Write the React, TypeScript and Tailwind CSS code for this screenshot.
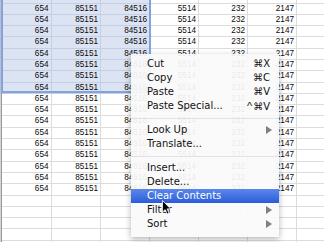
const cols = ['654', '85151', '84516', '5514', '232', '2147'];

const gridCols = 'grid grid-cols-[2px_49.5px_49.5px_49px_49px_49px_49px_27px]';

const Row = ({ filled, selected, first }: { filled: boolean; selected: boolean; first?: boolean }) => (
  <div className={`${gridCols} h-[11.3px] ${first ? '-mt-[7.8px]' : ''}`}>
    <div className={`border-r border-[#9a9a9a] ${selected ? 'bg-[#b9c3d8]' : 'bg-[#d4d4d4]'}`}></div>
    {cols.map((v, i) => (
      <div
        key={i}
        className={`border-r border-b pr-[2px] text-right text-[8.2px] leading-[10.3px] text-[#0a0a0a] ${
          selected && i < 3 ? 'bg-[#dce4f3] border-[#c4cfe3]' : 'border-[#dcdcdc]'
        }`}
      >
        {filled ? v : ''}
      </div>
    ))}
    <div className="border-b border-[#dcdcdc]"></div>
  </div>
);

const Arrow = () => (
  <svg width="6" height="8" viewBox="0 0 6 8">
    <polygon points="0,0 6,4 0,8" fill="#808080" />
  </svg>
);

type Item = { label: string; key?: string; ctrl?: boolean; sub?: boolean; active?: boolean } | 'sep';

const items: Item[] = [
  { label: 'Cut', key: '⌘X' },
  { label: 'Copy', key: '⌘C' },
  { label: 'Paste', key: '⌘V' },
  { label: 'Paste Special...', key: '⌘V', ctrl: true },
  'sep',
  { label: 'Look Up', sub: true },
  { label: 'Translate...' },
  'sep',
  { label: 'Insert...' },
  { label: 'Delete...' },
  { label: 'Clear Contents', active: true },
  { label: 'Filter', sub: true },
  { label: 'Sort', sub: true },
];

export default function App() {
  const rows = Array.from({ length: 23 }, (_, i) => i);
  return (
    <div className="relative w-[324px] h-[242px] overflow-hidden bg-white font-['Liberation_Sans',sans-serif]">
      <div className="flex flex-col">
        {rows.map((i) => (
          <Row key={i} first={i === 0} filled={i <= 17} selected={i <= 8} />
        ))}
      </div>

      {/* selection outline */}
      <div className="absolute left-[1px] top-[-3px] w-[150px] h-[96px] border-2 border-[#86a2da]"></div>

      {/* context menu */}
      <div className="absolute left-[131px] top-[54px] w-[148px] h-[183px] pt-[3px] bg-[rgba(250,250,250,0.93)] shadow-[0_2px_6px_rgba(0,0,0,0.3)] font-['DejaVu_Sans',sans-serif] text-[10px] text-[#111]">
        {items.map((it, i) =>
          it === 'sep' ? (
            <div key={i} className="h-[10px] flex items-center">
              <div className="w-full h-px bg-[#e2e2e2]"></div>
            </div>
          ) : (
            <div
              key={i}
              className={`h-[14px] flex items-center justify-between pl-[16px] pr-[7px] leading-[14px] ${
                it.active ? 'bg-linear-to-b from-[#5c87ea] to-[#2a5cda] text-white' : ''
              }`}
            >
              <span>{it.label}</span>
              {it.key && (
                <span className="pr-[2px]">
                  {it.ctrl && <span className="font-['Liberation_Sans',sans-serif] text-[11px] mr-px">^</span>}
                  {it.key}
                </span>
              )}
              {it.sub && <Arrow />}
            </div>
          )
        )}
      </div>

      {/* mouse cursor */}
      <svg className="absolute left-[162px] top-[200px]" width="10" height="15" viewBox="0 0 10 15">
        <path d="M0.5 0.5 L0.5 12 L3.2 9.6 L5.2 14 L7 13.2 L5.1 8.9 L8.6 8.9 Z" fill="#000" stroke="#fff" strokeWidth="0.8" />
      </svg>
    </div>
  );
}
